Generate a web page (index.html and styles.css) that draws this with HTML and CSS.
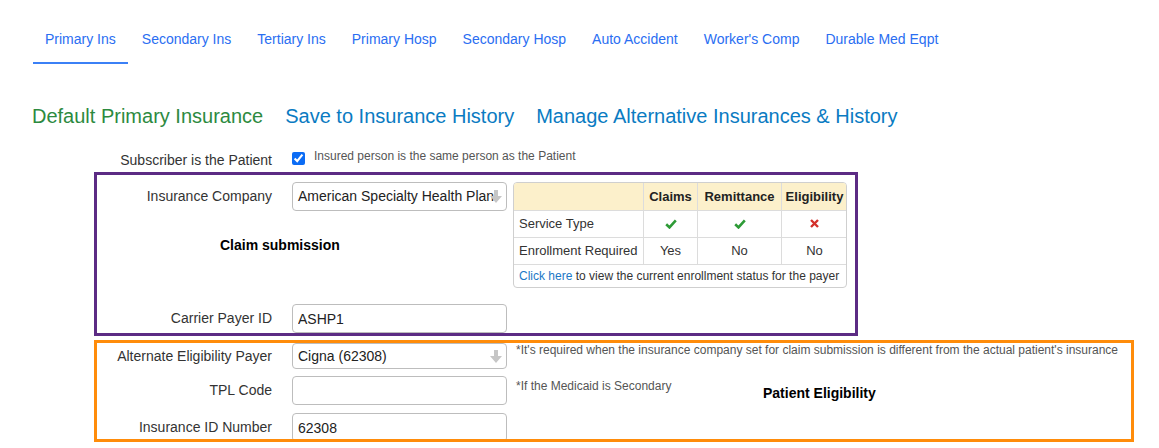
FILE: index.html
```html
<html>
<head>
    <title>Insurance</title>
    <link rel="stylesheet" href="styles.css">
</head>
<body>
    <ul class="tabs">
        <li class="tab active">Primary Ins</li>
        <li class="tab">Secondary Ins</li>
        <li class="tab">Tertiary Ins</li>
        <li class="tab">Primary Hosp</li>
        <li class="tab">Secondary Hosp</li>
        <li class="tab">Auto Accident</li>
        <li class="tab">Worker's Comp</li>
        <li class="tab">Durable Med Eqpt</li>
    </ul>

    <div class="headings">
        <span class="heading heading-green">Default Primary Insurance</span>
        <a class="heading">Save to Insurance History</a>
        <a class="heading">Manage Alternative Insurances &amp; History</a>
    </div>

    <div class="form">
        <div class="row plain">
            <label class="label label-check">Subscriber is the Patient</label>
            <div class="check">
                <input type="checkbox" checked>
                <span class="hint">Insured person is the same person as the Patient</span>
            </div>
        </div>

        <div class="frame frame-claim">
            <div class="row">
                <div class="col-main">
                    <div class="row">
                        <label class="label">Insurance Company</label>
                        <div class="select">American Specialty Health Plan
                            <svg class="arrow" width="12" height="13" viewBox="0 0 12 13"><path d="M4 0h4v6h4l-6 7-6-7h4z" fill="#c6c6c6"/></svg>
                        </div>
                    </div>
                    <div class="section-title claim-title">Claim submission</div>
                </div>
                <div class="status">
                    <table>
                        <tr>
                            <th class="c1"></th>
                            <th class="c2">Claims</th>
                            <th class="c3">Remittance</th>
                            <th class="c4">Eligibility</th>
                        </tr>
                        <tr>
                            <td class="first">Service Type</td>
                            <td><svg width="12" height="10" viewBox="0 0 12 10"><path d="M1.2 5.2l3.3 3.2 6.3-7" fill="none" stroke="#2e9b37" stroke-width="2.6"/></svg></td>
                            <td><svg width="12" height="10" viewBox="0 0 12 10"><path d="M1.2 5.2l3.3 3.2 6.3-7" fill="none" stroke="#2e9b37" stroke-width="2.6"/></svg></td>
                            <td><svg width="9" height="9" viewBox="0 0 9 9"><path d="M1 1l7 7M8 1l-7 7" fill="none" stroke="#d3302b" stroke-width="2.4"/></svg></td>
                        </tr>
                        <tr>
                            <td class="first">Enrollment Required</td>
                            <td>Yes</td>
                            <td>No</td>
                            <td>No</td>
                        </tr>
                        <tr>
                            <td class="foot" colspan="4"><a class="link">Click here</a> to view the current enrollment status for the payer</td>
                        </tr>
                    </table>
                </div>
            </div>
            <div class="row row-carrier">
                <label class="label">Carrier Payer ID</label>
                <input class="input" type="text" value="ASHP1">
            </div>
        </div>

        <div class="frame frame-elig">
            <div class="row">
                <label class="label label-select">Alternate Eligibility Payer</label>
                <div class="select select-short">Cigna (62308)
                    <svg class="arrow" width="12" height="13" viewBox="0 0 12 13"><path d="M4 0h4v6h4l-6 7-6-7h4z" fill="#c6c6c6"/></svg>
                </div>
                <div class="hint note note-top">*It's required when the insurance company set for claim submission is different from the actual patient's insurance</div>
            </div>
            <div class="row row-next">
                <label class="label">TPL Code</label>
                <input class="input" type="text" value="">
                <div class="aside">
                    <div class="hint note">*If the Medicaid is Secondary</div>
                    <div class="section-title elig-title">Patient Eligibility</div>
                </div>
            </div>
            <div class="row row-next">
                <label class="label">Insurance ID Number</label>
                <input class="input" type="text" value="62308">
            </div>
        </div>

        <div class="row plain row-after">
            <span class="label"></span>
            <input class="input" type="text" value="">
        </div>
    </div>
</body>
</html>
```

FILE: styles.css
```css
body {
    font-family: "Liberation Sans", Arial, sans-serif;
    font-size: 14px;
    color: #333;
    background-color: #ffffff;
    margin: 0;
    padding: 0;
}
.tabs {
    display: flex;
    gap: 2px;
    list-style: none;
    margin: 19px 0 0 33px;
    padding: 0;
}
.tab {
    padding: 10px 12px 13px;
    line-height: 20px;
    color: #2a6ef2;
    border-bottom: 2px solid transparent;
    cursor: pointer;
}
.tab.active {
    border-bottom-color: #3b80f6;
}
.headings {
    display: flex;
    gap: 22px;
    margin: 40px 0 0 32px;
}
.heading {
    font-size: 20px;
    line-height: 24px;
    color: #0a7bc2;
    cursor: pointer;
}
.heading-green {
    color: #2d8a3f;
}
.form {
    margin: 22px 0 0 94px;
}
.row {
    display: flex;
    align-items: flex-start;
}
.plain {
    padding-left: 3px;
}
.label {
    width: 175px;
    margin-right: 20px;
    text-align: right;
    line-height: 29px;
    flex-shrink: 0;
}
.label-check {
    line-height: 20px;
}
.label-select {
    line-height: 26px;
}
.check {
    display: flex;
    align-items: flex-start;
}
.check input {
    width: 13px;
    height: 13px;
    margin: 2px 9px 0 0;
    accent-color: #0b6cf5;
}
.hint {
    font-size: 12px;
    line-height: 16px;
    color: #555;
}
.check .hint {
    margin-top: -2px;
}
.frame {
    position: relative;
    box-sizing: border-box;
    padding: 10px 0 3px 3px;
}
.frame::after {
    content: "";
    position: absolute;
    top: 0;
    left: 0;
    right: 0;
    bottom: 0;
    border: 3px solid #5c2b84;
    pointer-events: none;
}
.frame-claim {
    width: 764px;
    margin-top: 2px;
}
.frame-elig {
    width: 1040px;
    margin-top: 4px;
    padding: 3px 0 0 3px;
}
.frame-elig::after {
    border-color: #ff8c0a;
}
.select, .input {
    box-sizing: border-box;
    width: 215px;
    height: 29px;
    border: 1px solid #bdbdbd;
    border-radius: 4px;
    background-color: #fff;
    font-family: "Liberation Sans", Arial, sans-serif;
    font-size: 14px;
    color: #222;
    padding: 0 5px;
    flex-shrink: 0;
}
.select {
    position: relative;
    line-height: 27px;
    white-space: nowrap;
    overflow: hidden;
}
.select-short {
    height: 26px;
    line-height: 24px;
}
.select .arrow {
    position: absolute;
    right: 4px;
    top: 7px;
}
.select-short .arrow {
    top: 6px;
}
.input {
    outline: none;
}
.section-title {
    font-weight: bold;
    font-size: 14px;
    line-height: 20px;
    color: #000;
}
.claim-title {
    margin: 24px 0 0 123px;
}
.status {
    margin-left: 6px;
    width: 334px;
    box-sizing: border-box;
    border: 1px solid #cfcfcf;
    border-radius: 4px;
    overflow: hidden;
}
.status table {
    width: 332px;
    border-collapse: collapse;
    table-layout: fixed;
    font-size: 13px;
    color: #333;
}
.status th, .status td {
    border-right: 1px solid #dcdcdc;
    border-bottom: 1px solid #dcdcdc;
    text-align: center;
    padding: 0;
    height: 27px;
}
.status th:last-child, .status td:last-child {
    border-right: none;
}
.status th {
    background-color: #fcf0cb;
    font-weight: bold;
    color: #222;
}
.status .c1 { width: 129px; }
.status .c2 { width: 53px; }
.status .c3 { width: 83px; }
.status .c4 { width: 65px; }
.status td.first {
    text-align: left;
    padding-left: 5px;
}
.status td svg {
    display: block;
    margin: 0 auto;
}
.status td.foot {
    border-bottom: none;
    border-right: none;
    text-align: left;
    padding-left: 5px;
    height: 23px;
    font-size: 12px;
}
.link {
    color: #1b78c6;
    cursor: pointer;
}
.row-carrier {
    margin-top: 16px;
}
.note {
    margin-left: 9px;
}
.note-top {
    margin-top: -1px;
    white-space: nowrap;
}
.row-next {
    margin-top: 7px;
}
.row-next + .row-next {
    margin-top: 8px;
}
.aside {
    display: grid;
    grid-template-columns: 256px auto;
}
.aside .note {
    margin-top: 2px;
}
.elig-title {
    margin-top: 7px;
}
.row-after {
    margin-top: 6px;
}
```
